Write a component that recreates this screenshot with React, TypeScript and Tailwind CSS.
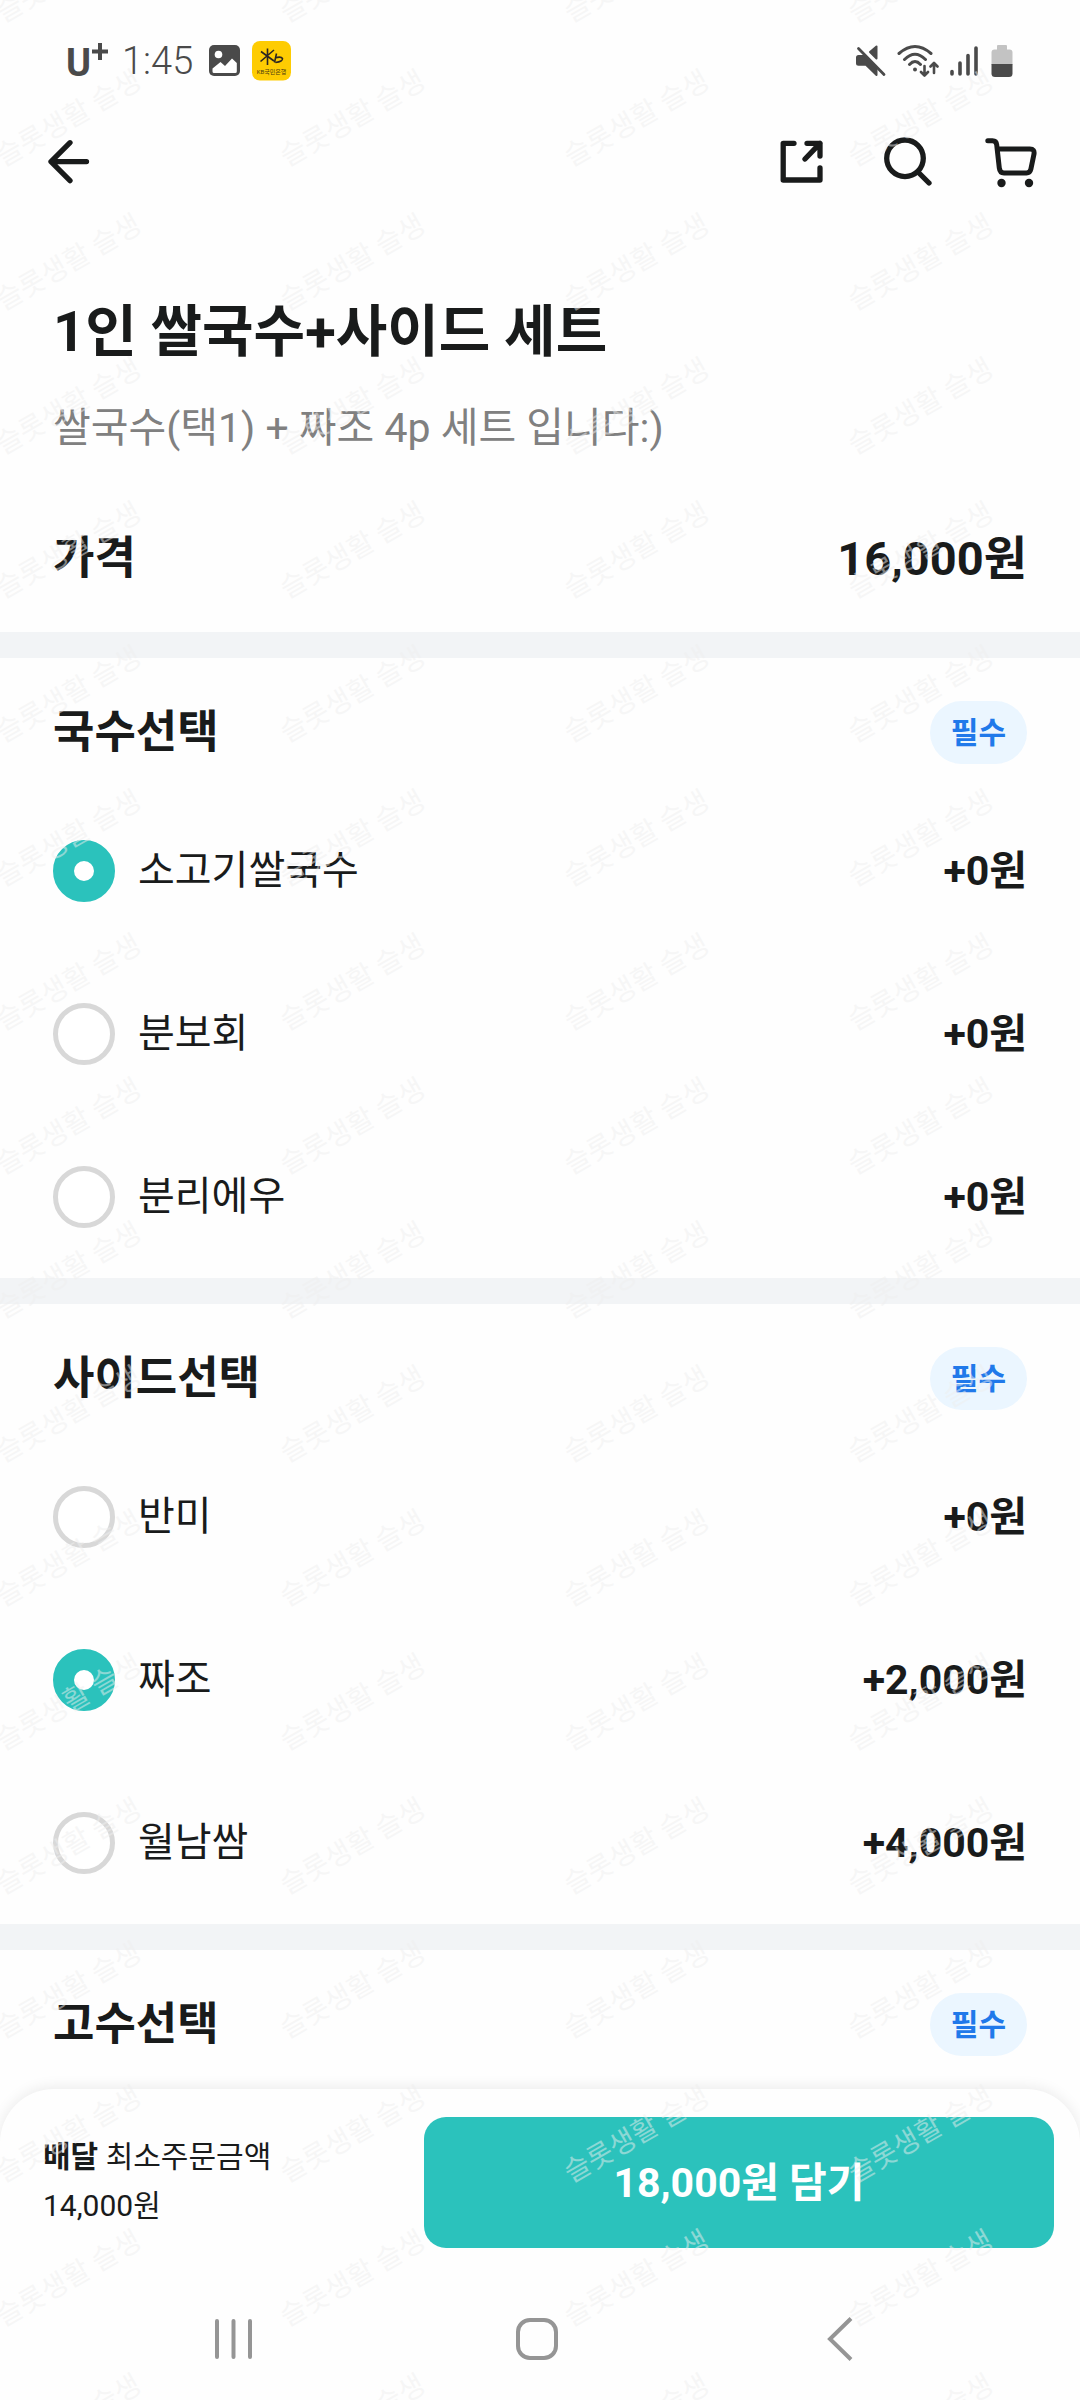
import { useState } from "react";

type Option = { id: string; name: string; price: string };

type OptionGroup = { id: string; title: string; options: Option[] };

const groups: OptionGroup[] = [
  {
    id: "noodle",
    title: "국수선택",
    options: [
      { id: "beef", name: "소고기쌀국수", price: "+0원" },
      { id: "bunbohue", name: "분보회", price: "+0원" },
      { id: "bunrieu", name: "분리에우", price: "+0원" },
    ],
  },
  {
    id: "side",
    title: "사이드선택",
    options: [
      { id: "banhmi", name: "반미", price: "+0원" },
      { id: "chajo", name: "짜조", price: "+2,000원" },
      { id: "wrap", name: "월남쌈", price: "+4,000원" },
    ],
  },
  { id: "cilantro", title: "고수선택", options: [] },
];

function StatusBar() {
  return (
    <div className="flex h-[122px] items-center justify-between pr-[67px] pl-[66px] text-[#4a4a4a]">
      <div className="flex items-center">
        <div className="flex w-14 items-center">
          <span className="pt-1 text-[38px] leading-10 font-bold">U</span>
          <svg viewBox="0 0 18 40" className="h-10 w-[18px]" aria-hidden="true">
            <path d="M9 2v17M1 10.500h16" stroke="currentColor" strokeWidth="4" />
          </svg>
        </div>
        <span className="text-[38px] leading-10 font-light">1:45</span>
        <svg viewBox="0 0 32 32" className="ml-4 h-8 w-8" aria-hidden="true">
          <rect x="0" y="0" width="31" height="31" rx="5" fill="currentColor" />
          <circle cx="9.500" cy="9.500" r="3.800" fill="#fff" />
          <path d="M3.500 23.500l8-6.500 4.500 4 7-7.500 4.800 4.500v8.500q0 1.500-1.500 1.500H5q-1.500 0-1.500-1.500z" fill="#fff" />
        </svg>
        <svg viewBox="0 0 40 40" className="ml-[11px] h-10 w-10" aria-hidden="true">
          <rect x="0" y="0" width="39" height="39.500" rx="8" fill="#fecc02" />
          <g fill="none" stroke="#2c2622" strokeWidth="1.600">
            <path d="M9 10.500l13 9.500M22 9L8.500 20.500M15.500 7.500v16.500" />
            <path d="M24.500 12.500l-2 9M23 17q6-2 7.500.5.500 3-7 4" />
          </g>
          <text x="19.500" y="33" fontSize="6" textAnchor="middle" fill="#4a3a10">
            KB국민은행
          </text>
        </svg>
      </div>

      <div className="flex items-center gap-[11px]">
        <svg viewBox="0 0 30 32" className="h-8 w-[30px]" aria-hidden="true">
          <path d="M2.500 11h5L20.500 24v6L10 19.800H2.500q-1.500 0-1.500-1.500v-5.800q0-1.500 1.500-1.500z" fill="currentColor" stroke="currentColor" strokeWidth="2" strokeLinejoin="round" />
          <path d="M14 7l6.500-5.500V13.500z" fill="currentColor" stroke="currentColor" strokeWidth="2" strokeLinejoin="round" />
          <path d="M5 3.500L30 29" stroke="#fefefe" strokeWidth="2.500" />
          <path d="M2.500 3.500L28 29.500" stroke="currentColor" strokeWidth="2.800" strokeLinecap="round" />
        </svg>
        <svg viewBox="0 0 42 34" className="h-[34px] w-[42px]" fill="none" stroke="currentColor" strokeWidth="3" strokeLinecap="round" strokeLinejoin="round" aria-hidden="true">
          <path d="M2 9.500Q18 -4.500 34 9.500M7.500 15.500Q18 5 28.500 15.500M12.500 20.500Q18 14.500 23.500 20.500" />
          <circle cx="18" cy="25.500" r="2" fill="currentColor" stroke="none" />
          <path d="M27.500 22v9M24 28l3.500 3.500L31 28M37 29v-9.500M33.500 22.500L37 19l3.500 3.500" strokeWidth="2.600" />
        </svg>
        <svg viewBox="0 0 30 32" className="h-8 w-[30px]" stroke="currentColor" strokeWidth="3.600" strokeLinecap="round" aria-hidden="true">
          <path d="M2 26.500v2.500M10 18v11M18 10.500v18.500M26 3v26" />
        </svg>
        <svg viewBox="0 0 22 34" className="h-[34px] w-[22px]" aria-hidden="true">
          <path d="M7 1h8q1 0 1 1v3.500h2.500q3 0 3 3V21H.5V8.500q0-3 3-3H6V2q0-1 1-1z" fill="#c3c3c3" />
          <path d="M.5 20h21v9.500q0 3.500-3.500 3.500H4Q.5 33 .5 29.500z" fill="currentColor" />
        </svg>
      </div>
    </div>
  );
}

function Header() {
  return (
    <header className="flex h-20 items-center justify-between pr-[43px] pl-11">
      <button type="button" aria-label="뒤로">
        <svg viewBox="0 0 52 52" className="h-[52px] w-[52px]" fill="none" stroke="currentColor" strokeWidth="5.300" strokeLinecap="round" strokeLinejoin="round">
          <path d="M26 6.700L7 25.600l19 19M7 25.600h35.500" />
        </svg>
      </button>
      <div className="flex gap-[53px]">
        <button type="button" aria-label="공유">
          <svg viewBox="0 0 52 52" className="h-[52px] w-[52px]" fill="none" stroke="currentColor" strokeWidth="5.300" strokeLinecap="round" strokeLinejoin="round">
            <path d="M19 7.300H8.200V44H45V32" />
            <path d="M32 7.300H45V20M45 7.300L30 23" />
          </svg>
        </button>
        <button type="button" aria-label="검색">
          <svg viewBox="0 0 52 52" className="h-[52px] w-[52px]" fill="none" stroke="currentColor" strokeWidth="5.300" strokeLinecap="round">
            <circle cx="25" cy="22.300" r="18.300" />
            <path d="M38.500 36.500L49 47" />
          </svg>
        </button>
        <button type="button" aria-label="장바구니">
          <svg viewBox="0 0 52 52" className="h-[52px] w-[52px]" fill="none" stroke="currentColor" strokeWidth="5" strokeLinecap="round" strokeLinejoin="round">
            <path d="M2.800 4.700H7.500c2.600 0 3.900 1.300 4.200 4L14.300 32c.4 3.500 1.700 5 4.700 5h22.500c2.500 0 3.800-1.300 4.400-4l3-14.500c.8-4-.8-5.500-4-5.500H13" />
            <circle cx="16.500" cy="47" r="4.200" fill="currentColor" stroke="none" />
            <circle cx="44" cy="47" r="4.200" fill="currentColor" stroke="none" />
          </svg>
        </button>
      </div>
    </header>
  );
}

function OptionSection({
  group,
  selected,
  onSelect,
}: {
  group: OptionGroup;
  selected?: string;
  onSelect: (id: string) => void;
}) {
  return (
    <section className="border-t-[26px] border-[#f2f4f6] pt-[43px]">
      <div className="flex h-[63px] items-center justify-between px-[53px]">
        <h2 className="text-[45px] leading-[64px] font-bold">{group.title}</h2>
        <span className="flex h-[63px] items-center rounded-full bg-[#ebf6ff] px-[21px] text-[30px] leading-10 font-bold text-[#2079ea]">
          필수
        </span>
      </div>
      {group.options.length > 0 && (
        <div className="pt-[25px]">
          {group.options.map((option) => (
            <label key={option.id} className="flex h-[163px] items-center px-[53px] text-[40px] leading-[60px]">
              <input
                type="radio"
                name={group.id}
                checked={selected === option.id}
                onChange={() => onSelect(option.id)}
                className="h-[62px] w-[62px] shrink-0 appearance-none rounded-full border-[5px] border-[#d8d8d8] bg-white checked:border-[21px] checked:border-[#2bc2bc]"
              />
              <span className="ml-[23px] flex-1">{option.name}</span>
              <span className="text-[41px] font-bold">{option.price}</span>
            </label>
          ))}
        </div>
      )}
    </section>
  );
}

function NavigationBar() {
  return (
    <nav className="mt-[30px] grid h-[122px] grid-cols-3 place-items-center pr-[89px] pl-[82px] text-[#959595]">
      <button type="button" aria-label="최근 앱">
        <svg viewBox="0 0 44 44" className="h-11 w-11" fill="none" stroke="currentColor" strokeWidth="4" strokeLinecap="round">
          <path d="M5 4v36M21.500 4v36M38 4v36" />
        </svg>
      </button>
      <button type="button" aria-label="홈">
        <svg viewBox="0 0 44 44" className="h-11 w-11" fill="none" stroke="currentColor" strokeWidth="4">
          <rect x="3" y="3" width="38" height="38" rx="12" />
        </svg>
      </button>
      <button type="button" aria-label="뒤로 가기">
        <svg viewBox="0 0 44 44" className="h-11 w-11" fill="none" stroke="currentColor" strokeWidth="4">
          <path d="M33 1.500L12 22l21 20.500" />
        </svg>
      </button>
    </nav>
  );
}

// Repeating diagonal mark laid over the whole screen
function Watermark() {
  return (
    <div className="pointer-events-none absolute inset-0 z-20 overflow-hidden" aria-hidden="true">
      <div className="-mt-[97px] -ml-[73px] grid auto-rows-[144px] grid-cols-[repeat(4,284px)]">
        {Array.from({ length: 72 }, (_, i) => (
          <div key={i} className="flex items-center justify-center">
            <span className="-rotate-30 text-[28px] leading-8 whitespace-nowrap text-[#eeeeee]/50">슬롯생활 슬생</span>
          </div>
        ))}
      </div>
    </div>
  );
}

export default function App() {
  const [selected, setSelected] = useState<Record<string, string>>({
    noodle: "beef",
    side: "chajo",
  });

  return (
    <div className="relative flex min-h-screen flex-col overflow-hidden bg-[#fefefe] font-[Roboto,'Noto_Sans_CJK_KR',sans-serif] text-[#191b1b]">
      <StatusBar />
      <Header />

      <main className="flex-1 pb-[33px]">
        <div className="px-[53px] pt-[90px] pb-[41px]">
          <h1 className="text-[56px] leading-[80px] font-bold">1인 쌀국수+사이드 세트</h1>
          <p className="mt-[26px] text-[41px] leading-[60px] text-[#808080]">쌀국수(택1) + 짜조 4p 세트 입니다:)</p>
          <div className="mt-[69px] flex justify-between leading-[64px] font-bold">
            <span className="text-[45px]">가격</span>
            <span className="text-[47px]">16,000원</span>
          </div>
        </div>

        {groups.map((group) => (
          <OptionSection
            key={group.id}
            group={group}
            selected={selected[group.id]}
            onSelect={(id) => setSelected({ ...selected, [group.id]: id })}
          />
        ))}
      </main>

      <footer className="sticky bottom-0 rounded-t-[54px] bg-[#fefefe] pt-7 shadow-[0_-2px_14px_rgba(0,0,0,0.08)]">
        <div className="flex items-center justify-between pr-[26px] pl-[43px]">
          <p className="pb-[3px] text-[30px] leading-[49px]">
            <strong>배달</strong> 최소주문금액
            <br />
            14,000원
          </p>
          <button type="button" className="h-[131px] w-[630px] rounded-[22px] bg-[#2bc2bc] text-[41px] leading-[60px] font-bold text-white">
            18,000원 담기
          </button>
        </div>
        <NavigationBar />
      </footer>

      <Watermark />
    </div>
  );
}
